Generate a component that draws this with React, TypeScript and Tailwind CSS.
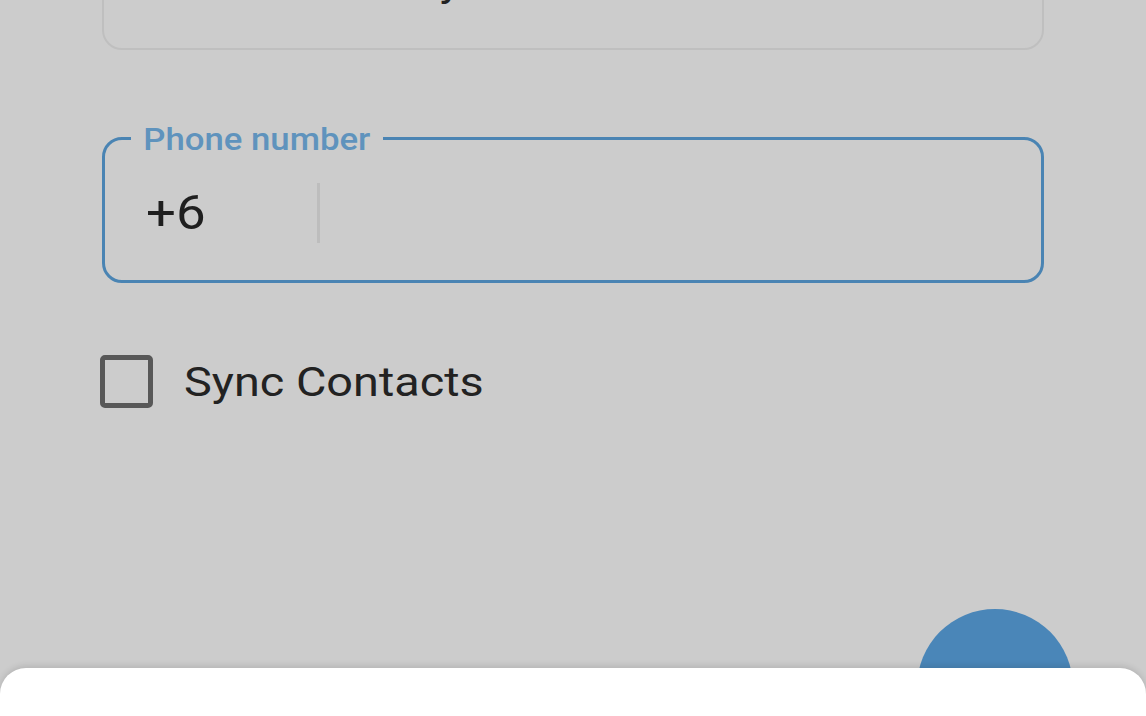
import React from 'react';

const font = "font-['Roboto','Liberation_Sans',sans-serif]";

export default function App() {
  return (
    <div className={`relative w-[1146px] h-[716px] overflow-hidden bg-[#cccccc] ${font}`}>
      <div className="px-[102px]">
        {/* country field, mostly scrolled off the top */}
        <div className="-mt-[90px] h-[140px] flex items-end pb-[45px] border-2 border-[#bfbfbf] rounded-[20px]">
          <span className="inline-block origin-left scale-x-[1.12] pl-[212px] text-[40px] leading-[40px] text-[#222]">
            Malaysia
          </span>
        </div>

        {/* phone number field */}
        <div className="relative mt-[87px] h-[146px] flex items-center pt-[6px] border-[3px] border-[#4a84b3] rounded-[20px]">
          <span className="absolute left-[26px] top-0 -translate-y-1/2 origin-left scale-x-[1.12] px-[11px] bg-[#cccccc] text-[31px] leading-[34px] font-medium text-[#5f93bd]">
            Phone number
          </span>
          <div className="w-[212px] pl-[41px]">
            <span className="inline-block origin-left scale-x-[1.1] text-[48px] leading-[48px] text-[#1f1f1f]">+6</span>
          </div>
          <div className="w-[3px] h-[60px] bg-[#bdbdbd]" />
        </div>

        {/* sync contacts */}
        <div className="mt-[72px] -ml-[2px] flex items-center gap-[31px]">
          <div className="w-[53px] h-[53px] rounded-[5px] border-[5px] border-[#585858]" />
          <span className="inline-block origin-left scale-x-[1.17] pt-[3px] text-[40px] leading-[40px] text-[#222]">
            Sync Contacts
          </span>
        </div>
      </div>

      {/* floating action button, partly hidden by the sheet */}
      <div className="absolute left-[917px] top-[609px] w-[156px] h-[156px] rounded-full bg-[#4a86b8]" />

      {/* bottom sheet */}
      <div className="absolute left-0 right-0 top-[668px] bottom-0 bg-white rounded-t-[26px] shadow-[0_-2px_6px_rgba(0,0,0,0.12)]" />
    </div>
  );
}
